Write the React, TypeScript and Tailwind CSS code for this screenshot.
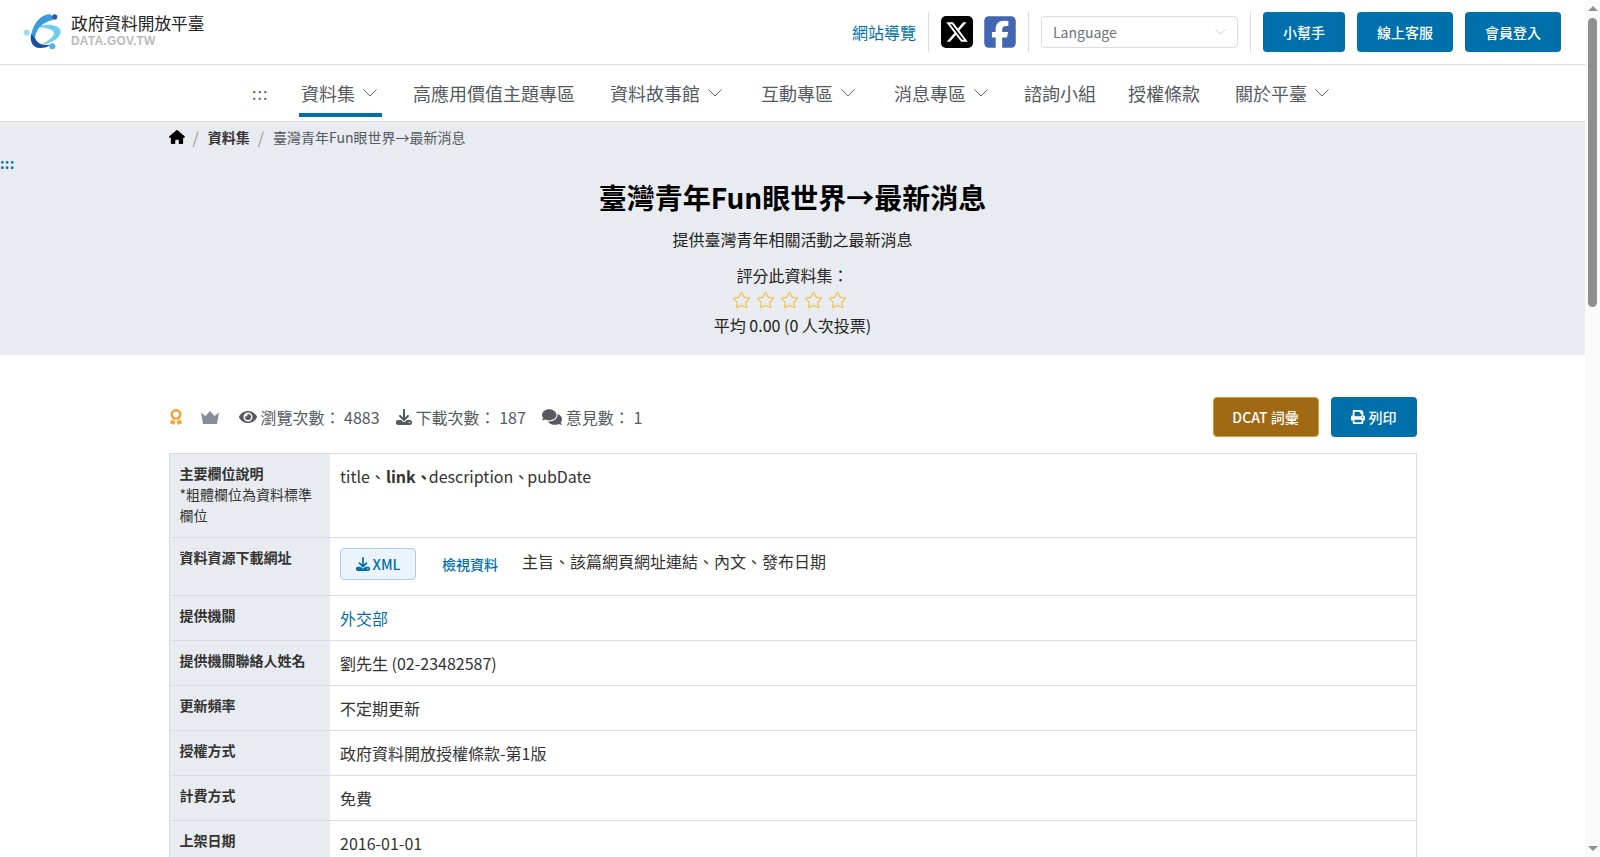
import React from "react";
import { FaAward, FaEye, FaComments, FaPrint } from "react-icons/fa";
import { FaDownload, FaXTwitter, FaSquareFacebook, FaHouse } from "react-icons/fa6";
import { Star } from "lucide-react";

const font = { fontFamily: '"Noto Sans CJK TC", "Noto Sans", sans-serif' };

function Logo() {
  return (
    <svg viewBox="25 20 126 120" className="w-[42px] h-[40px] shrink-0">
      <path d="M62 66 C95 52 134 58 138 76 C141 95 112 114 78 119 C100 108 120 92 118 82 C115 72 92 66 62 66Z" fill="#6fcdee" />
      <path d="M105 27 C85 27 60 45 50 85 C50 95 56 102 61 102 C62 75 78 52 114 44 C117 38 112 29 105 27Z" fill="#3a9bdc" />
      <path d="M50 85 C43 107 55 128 76 128 C90 128 100 124 108 118 C90 121 70 118 62 100 C58 96 54 90 50 85Z" fill="#1c4ea0" />
      <circle cx="120" cy="35" r="8" fill="#2c5cab" />
      <circle cx="36" cy="82" r="9" fill="#9adcf3" />
      <circle cx="113" cy="123" r="9" fill="#4db3e6" />
    </svg>
  );
}

function Chevron({ className }: { className?: string }) {
  return (
    <svg viewBox="0 0 14 8" fill="none" stroke="currentColor" strokeWidth="1" className={className}>
      <path d="M0.5 0.5 L7 7 L13.5 0.5" />
    </svg>
  );
}

function NavItem({ label, chevron, active, className = "" }: { label: string; chevron?: boolean; active?: boolean; className?: string }) {
  return (
    <a className={`flex items-center gap-[8px] h-[52px] pt-[8px] ${active ? "pl-[2px]" : "pl-[3px]"} ${chevron ? "pr-[5px]" : "pr-[3px]"} text-[18px] text-[#555a60] border-b-4 ${active ? "border-[#0070aa]" : "border-transparent"} ${className}`}>
      <span>{label}</span>
      {chevron && <Chevron className="w-[14px] h-[8px] text-[#666]" />}
    </a>
  );
}

function Row({ label, children }: { label: React.ReactNode; children: React.ReactNode }) {
  return (
    <tr className="border-t border-[#d9dce3] first:border-t-0">
      <th className="bg-[#e8ebf0] px-[10px] pt-[9px] pb-[11px] text-left align-top text-[14px] leading-[21px] font-bold text-[#333]">{label}</th>
      <td className="px-[10px] py-[10px] align-top text-[16px] leading-[24px] text-[#333]">{children}</td>
    </tr>
  );
}

function Btn({ children, w }: { children: React.ReactNode; w: string }) {
  return <a className={`${w} h-[40px] flex items-center justify-center rounded-[4px] bg-[#0070aa] text-white text-[14px] font-medium`}>{children}</a>;
}

function Crown() {
  return (
    <svg viewBox="0 0 18 13" className="w-[18px] h-[13px] ml-[17px] text-[#8a8d99]" fill="currentColor">
      <path d="M0 1.5 L4.5 5 L9 0 L13.5 5 L18 1.5 L16 13 L2 13 Z" />
    </svg>
  );
}

export default function App() {
  return (
    <div style={font} className="h-[857px] overflow-hidden flex bg-white text-[#222]">
      <div className="flex-1 min-w-0">
        <header className="h-[65px] border-b border-[#d9dce6] flex items-center pl-[23px] pr-[24px]">
          <div className="flex items-center gap-[6px]">
            <Logo />
            <div className="flex flex-col mt-[-5px]">
              <span className="text-[16.7px] leading-[22px] text-[#222]">政府資料開放平臺</span>
              <span style={{ fontFamily: '"Liberation Sans", sans-serif' }} className="text-[12px] leading-[14px] font-bold text-[#bbbbbb] tracking-[0.2px]">DATA.GOV.TW</span>
            </div>
          </div>
          <div className="ml-auto flex items-center">
            <a className="text-[16px] text-[#0070aa]">網站導覽</a>
            <div className="w-px h-[40px] bg-[#d9dce3] mx-[12px]" />
            <div className="w-[32px] h-[32px] rounded-[5px] bg-black flex items-center justify-center">
              <FaXTwitter className="w-[24px] h-[24px] text-white" />
            </div>
            <FaSquareFacebook className="w-[36px] h-[36px] ml-[9px] text-[#4267b2]" />
            <div className="w-px h-[40px] bg-[#d9dce3] ml-[10px] mr-[12px]" />
            <div className="w-[197px] h-[32px] border border-[#d9dce6] rounded-[4px] flex items-center justify-between pl-[11px] pr-[11px] text-[14px] text-[#6c7180]">
              <span>Language</span>
              <Chevron className="w-[11px] h-[6px] text-[#b9bcc6]" />
            </div>
            <div className="w-px h-[40px] bg-[#d9dce3] mx-[12px]" />
            <div className="flex gap-[12px]">
              <Btn w="w-[82px]">小幫手</Btn>
              <Btn w="w-[96px]">線上客服</Btn>
              <Btn w="w-[96px]">會員登入</Btn>
            </div>
          </div>
        </header>

        <nav className="h-[57px] border-b border-[#d9dce6] flex items-start pl-[252px]">
          <span className="w-[47px] mt-[16px] text-[16px] text-[#555a60] tracking-[1px]">:::</span>
          <NavItem label="資料集" chevron active />
          <NavItem label="高應用價值主題專區" className="ml-[28px]" />
          <NavItem label="資料故事館" chevron className="ml-[29px]" />
          <NavItem label="互動專區" chevron className="ml-[31px]" />
          <NavItem label="消息專區" chevron className="ml-[31px]" />
          <NavItem label="諮詢小組" className="ml-[28px]" />
          <NavItem label="授權條款" className="ml-[26px]" />
          <NavItem label="關於平臺" chevron className="ml-[29px]" />
        </nav>

        <section className="relative h-[233px] bg-[#e8ebf0]">
          <span className="absolute left-0 top-[31px] text-[14px] leading-[20px] font-bold text-[#0070aa] tracking-[0.3px]">:::</span>
          <div className="mx-auto w-[1248px] h-[30px] flex items-center text-[14px] text-[#555a60]">
            <FaHouse className="w-[16px] h-[14px] text-black" />
            <span className="ml-[8px] mr-[9px] text-[16px] text-[#999]">/</span>
            <span className="font-bold text-[#333]">資料集</span>
            <span className="ml-[8px] mr-[9px] text-[16px] text-[#999]">/</span>
            <span>臺灣青年Fun眼世界→最新消息</span>
          </div>
          <div className="flex flex-col items-center text-center">
            <h1 className="mt-[24px] text-[28px] leading-[42px] font-bold text-black">臺灣青年Fun眼世界→最新消息</h1>
            <p className="mt-[9px] text-[16px] leading-[24px]">提供臺灣青年相關活動之最新消息</p>
            <p className="mt-[12px] text-[16px] leading-[24px]">評分此資料集：</p>
            <div className="flex gap-[5px] h-[24px] items-center mr-[7px] mt-[1px]">
              {[0, 1, 2, 3, 4].map((i) => <Star key={i} strokeWidth={1.3} className="w-[19px] h-[19px] text-[#f5b936]" />)}
            </div>
            <p className="text-[16px] leading-[26px]">平均 0.00 (0 人次投票)</p>
          </div>
        </section>

        <main className="mx-auto w-[1248px]">
          <div className="mt-[42px] h-[40px] flex items-center text-[16px] text-[#555a60]">
            <FaAward className="w-[16px] h-[16px] -ml-[1px] text-[#f0a63a]" />
            <Crown />
            <FaEye className="w-[18px] h-[18px] ml-[20px]" />
            <span className="ml-[4px]">瀏覽次數： 4883</span>
            <FaDownload className="w-[16px] h-[16px] ml-[16px]" />
            <span className="ml-[4px]">下載次數： 187</span>
            <FaComments className="w-[20px] h-[20px] ml-[16px]" />
            <span className="ml-[4px]">意見數： 1</span>
            <a className="ml-auto w-[106px] h-[40px] flex items-center justify-center rounded-[4px] bg-[#a06914] border border-[#e0992f] text-white text-[14px] font-medium">DCAT 詞彙</a>
            <a className="ml-[12px] w-[86px] h-[40px] flex items-center justify-center gap-[4px] rounded-[4px] bg-[#0070aa] text-white text-[14px] font-medium">
              <FaPrint className="w-[14px] h-[14px]" />列印
            </a>
          </div>

          <table className="mt-[16px] w-full table-fixed border border-[#d9dce3] border-collapse">
            <colgroup>
              <col className="w-[161px]" />
              <col />
            </colgroup>
            <tbody>
              <Row label={<>主要欄位說明<br /><span className="font-normal">*粗體欄位為資料標準欄位</span></>}>
                title、<b>link</b><b className="tracking-[-3px]">、</b>description<span className="tracking-[-2px]">、</span>pubDate
              </Row>
              <Row label="資料資源下載網址">
                <div className="flex items-start pb-[5px]">
                  <a className="w-[76px] h-[32px] flex items-center justify-center gap-[3px] rounded-[4px] bg-[#ebf3fc] border border-[#a9cdee] text-[14px] font-medium text-[#0070aa]">
                    <FaDownload className="w-[14px] h-[14px]" />XML
                  </a>
                  <a className="ml-[26px] mt-[4px] text-[14px] leading-[24px] font-medium text-[#0070aa]">檢視資料</a>
                  <span className="ml-[24px] mt-[1px]">主旨、該篇網頁網址連結、內文、發布日期</span>
                </div>
              </Row>
              <Row label="提供機關"><a className="text-[#0070aa]">外交部</a></Row>
              <Row label="提供機關聯絡人姓名">劉先生 (02-23482587)</Row>
              <Row label="更新頻率">不定期更新</Row>
              <Row label="授權方式">政府資料開放授權條款-第1版</Row>
              <Row label="計費方式">免費</Row>
              <Row label="上架日期">2016-01-01</Row>
            </tbody>
          </table>
        </main>
      </div>

      <aside className="w-[15px] shrink-0 bg-[#fafafa] flex flex-col items-center pt-[6px]">
        <div className="w-0 h-0 border-x-[5px] border-x-transparent border-b-[5px] border-b-[#8f8f8f]" />
        <div className="mt-[7px] w-[9px] h-[289px] rounded-[5px] bg-[#8f8f8f]" />
        <div className="mt-auto mb-[6px] w-0 h-0 border-x-[5px] border-x-transparent border-t-[5px] border-t-[#8f8f8f]" />
      </aside>
    </div>
  );
}
